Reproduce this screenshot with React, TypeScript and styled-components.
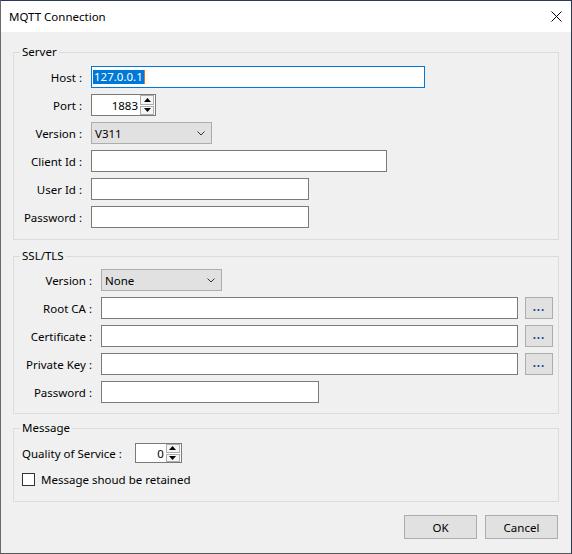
import React from 'react';
import styled, { createGlobalStyle } from 'styled-components';

const GlobalStyle = createGlobalStyle`
  html, body {
    margin: 0;
    padding: 0;
    background: #ffffff;
  }
  body {
    font-family: "Noto Sans", "Segoe UI", sans-serif;
  }
  * {
    box-sizing: border-box;
  }
`;

// Window chrome
const Window = styled.div`
  width: 572px;
  height: 554px;
  display: flex;
  flex-direction: column;
  background: #f0f0f0;
  border: 1px solid #2b3856;
  border-left-color: #6a6a6a;
  border-bottom-color: #555555;
  font-size: 11.5px;
  color: #000;
`;

const TitleBar = styled.div`
  height: 31px;
  flex-shrink: 0;
  display: flex;
  align-items: center;
  justify-content: space-between;
  padding: 0 9px 0 8px;
  background: #ffffff;
`;

const Title = styled.span`
  font-size: 11.5px;
  line-height: 16px;
  margin-top: 1px;
`;

const Body = styled.div`
  flex: 1;
  display: flex;
  flex-direction: column;
  padding: 12px 12px 0;
`;

// Group boxes
const Group = styled.fieldset<{ $gap: number; $top: number; $bottom: number; $right?: number }>`
  margin: ${({ $gap }) => $gap}px 0 0;
  padding: ${({ $top }) => $top}px ${({ $right }) => $right ?? 9}px ${({ $bottom }) => $bottom}px 8px;
  border: 1px solid #dcdcdc;
  min-width: 0;
`;

const Legend = styled.legend`
  padding: 0 2px;
  margin-left: -2px;
  font-size: 11.5px;
  line-height: 16px;
`;

const FormGrid = styled.div<{ $columns: string }>`
  display: grid;
  grid-template-columns: ${({ $columns }) => $columns};
  grid-auto-rows: 22px;
  column-gap: 7px;
  row-gap: 6px;
  align-items: center;
  justify-items: start;
`;

const Label = styled.label`
  grid-column: 1;
  justify-self: stretch;
  height: 22px;
  text-align: right;
  padding: 1px 2px 0 0;
  white-space: nowrap;
  line-height: 21px;
`;

// Controls
const TextBox = styled.input<{ $w: number }>`
  width: ${({ $w }) => $w}px;
  height: 22px;
  margin: 0;
  padding: 0 2px;
  border: 1px solid #7a7a7a;
  border-radius: 0;
  background: #ffffff;
  font: inherit;
  outline: none;
`;

const FocusedBox = styled.div<{ $w: number }>`
  width: ${({ $w }) => $w}px;
  height: 22px;
  display: flex;
  align-items: center;
  padding-left: 1px;
  border: 1px solid #0078d7;
  background: #ffffff;
`;

const Selected = styled.span`
  background: #0078d7;
  color: #ffffff;
  line-height: 14px;
  padding: 0 1px;
  border-right: 1px solid #e8731c;
`;

const Spinner = styled.div<{ $w: number; $h: number }>`
  width: ${({ $w }) => $w}px;
  height: ${({ $h }) => $h}px;
  display: flex;
  border: 1px solid #7a7a7a;
  background: #ffffff;
`;

const SpinValue = styled.div`
  flex: 1;
  display: flex;
  align-items: center;
  justify-content: flex-end;
  padding: 1px 2px 0 0;
`;

const SpinButtons = styled.div`
  width: 15px;
  display: flex;
  flex-direction: column;
  gap: 1px;
  padding: 0 1px 0 0;
`;

const SpinButton = styled.div`
  flex: 1;
  display: flex;
  align-items: center;
  justify-content: center;
  border: 1px solid #adadad;
  background: #f5f5f5;
`;

const Combo = styled.div<{ $w: number }>`
  width: ${({ $w }) => $w}px;
  height: 22px;
  display: flex;
  align-items: center;
  justify-content: space-between;
  padding: 1px 6px 0 3px;
  border: 1px solid #adadad;
  background: #e1e1e1;
`;

const BrowseButton = styled.button`
  width: 28px;
  height: 22px;
  margin: 0;
  padding: 0 0 2px;
  border: 1px solid #adadad;
  background: #e1e1e1;
  font: inherit;
  font-weight: 700;
  letter-spacing: 1px;
  color: #1b3f87;
  line-height: 16px;
`;

const MessageRow = styled.div`
  display: flex;
  align-items: center;
  gap: 13px;
  height: 20px;
`;

const CheckRow = styled.label`
  display: flex;
  align-items: center;
  gap: 6px;
  height: 20px;
  margin-top: 6px;
`;

const CheckBox = styled.span`
  width: 13px;
  height: 13px;
  border: 1px solid #333333;
  background: #ffffff;
`;

const Footer = styled.div`
  display: flex;
  justify-content: flex-end;
  gap: 8px;
  margin-top: 13px;
  padding-right: 1px;
`;

const DialogButton = styled.button`
  width: 73px;
  height: 24px;
  margin: 0;
  padding: 0;
  border: 1px solid #adadad;
  background: #e1e1e1;
  font: inherit;
  color: #000;
`;

const Chevron = () => (
  <svg width="8" height="5" viewBox="0 0 8 5">
    <path d="M0.5 0.5 L4 4 L7.5 0.5" fill="none" stroke="#333" strokeWidth="1" />
  </svg>
);

const Arrow = ({ up }: { up?: boolean }) => (
  <svg width="7" height="4" viewBox="0 0 7 4">
    <path d={up ? 'M0 4 L3.5 0 L7 4 Z' : 'M0 0 L3.5 4 L7 0 Z'} fill="#000" />
  </svg>
);

const CloseIcon = () => (
  <svg width="11" height="11" viewBox="0 0 11 11">
    <path d="M0.5 0.5 L10.5 10.5 M10.5 0.5 L0.5 10.5" stroke="#000" strokeWidth="1" />
  </svg>
);

const NumberSpin = ({ value, w, h }: { value: string; w: number; h: number }) => (
  <Spinner $w={w} $h={h}>
    <SpinValue>{value}</SpinValue>
    <SpinButtons>
      <SpinButton><Arrow up /></SpinButton>
      <SpinButton><Arrow /></SpinButton>
    </SpinButtons>
  </Spinner>
);

const App: React.FC = () => {
  return (
    <>
      <GlobalStyle />
      <Window>
        <TitleBar>
          <Title>MQTT Connection</Title>
          <CloseIcon />
        </TitleBar>
        <Body>
          <Group $gap={0} $top={6} $bottom={11}>
            <Legend>Server</Legend>
            <FormGrid $columns="62px auto">
              <Label>Host :</Label>
              <FocusedBox $w={334}>
                <Selected>127.0.0.1</Selected>
              </FocusedBox>
              <Label>Port :</Label>
              <NumberSpin value="1883" w={65} h={22} />
              <Label>Version :</Label>
              <Combo $w={121}>
                <span>V311</span>
                <Chevron />
              </Combo>
              <Label>Client Id :</Label>
              <TextBox $w={296} />
              <Label>User Id :</Label>
              <TextBox $w={218} />
              <Label>Password :</Label>
              <TextBox $w={218} type="password" />
            </FormGrid>
          </Group>

          <Group $gap={8} $top={5} $bottom={10} $right={5}>
            <Legend>SSL/TLS</Legend>
            <FormGrid $columns="72px 417px 28px">
              <Label>Version :</Label>
              <Combo $w={121}>
                <span>None</span>
                <Chevron />
              </Combo>
              <Label>Root CA :</Label>
              <TextBox $w={417} />
              <BrowseButton>...</BrowseButton>
              <Label>Certificate :</Label>
              <TextBox $w={417} />
              <BrowseButton>...</BrowseButton>
              <Label>Private Key :</Label>
              <TextBox $w={417} />
              <BrowseButton>...</BrowseButton>
              <Label>Password :</Label>
              <TextBox $w={218} type="password" />
            </FormGrid>
          </Group>

          <Group $gap={6} $top={7} $bottom={12}>
            <Legend>Message</Legend>
            <MessageRow>
              <span>Quality of Service :</span>
              <NumberSpin value="0" w={47} h={20} />
            </MessageRow>
            <CheckRow>
              <CheckBox />
              <span>Message shoud be retained</span>
            </CheckRow>
          </Group>

          <Footer>
            <DialogButton>OK</DialogButton>
            <DialogButton>Cancel</DialogButton>
          </Footer>
        </Body>
      </Window>
    </>
  );
};

export default App;
